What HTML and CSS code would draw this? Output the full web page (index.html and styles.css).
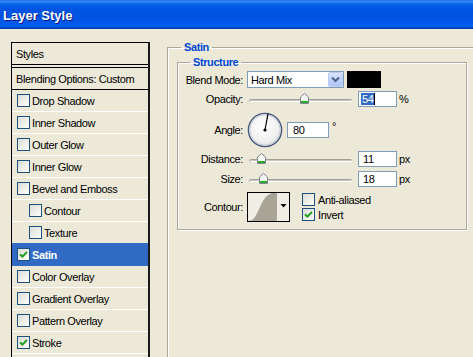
FILE: index.html
```html
<!DOCTYPE html>
<html>
<head>
<meta charset="utf-8">
<title>Layer Style</title>
<link rel="stylesheet" href="styles.css">
</head>
<body>
<div class="titlebar">Layer Style</div>
<div class="client">
  <div class="stylelist">
    <div class="item head">Styles</div>
    <div class="item head blend">Blending Options: Custom</div>
    <div class="item"><span class="cb"></span>Drop Shadow</div>
    <div class="item"><span class="cb"></span>Inner Shadow</div>
    <div class="item"><span class="cb"></span>Outer Glow</div>
    <div class="item"><span class="cb"></span>Inner Glow</div>
    <div class="item"><span class="cb"></span>Bevel and Emboss</div>
    <div class="item sub"><span class="cb"></span>Contour</div>
    <div class="item sub"><span class="cb"></span>Texture</div>
    <div class="item sel"><span class="cb"><svg viewBox="0 0 11 11" width="11" height="11"><path d="M2 5.2 L4.4 7.6 L9 3" fill="none" stroke="#21A121" stroke-width="2"/></svg></span>Satin</div>
    <div class="item"><span class="cb"></span>Color Overlay</div>
    <div class="item"><span class="cb"></span>Gradient Overlay</div>
    <div class="item"><span class="cb"></span>Pattern Overlay</div>
    <div class="item"><span class="cb"><svg viewBox="0 0 11 11" width="11" height="11"><path d="M2 5.2 L4.4 7.6 L9 3" fill="none" stroke="#21A121" stroke-width="2"/></svg></span>Stroke</div>
    <div class="item"></div>
  </div>

  <fieldset class="group satin">
    <legend>Satin</legend>
    <fieldset class="group structure">
      <legend>Structure</legend>

      <div class="row r-blend">
        <span class="lbl">Blend Mode:</span>
        <div class="select">
          <span class="sel-text">Hard Mix</span>
          <span class="sel-btn"><svg width="13" height="13" viewBox="0 0 13 13"><path d="M3 4.5 L6.5 8 L10 4.5" fill="none" stroke="#4D6185" stroke-width="2"/></svg></span>
        </div>
        <span class="swatch"></span>
      </div>

      <div class="row r-opacity">
        <span class="lbl">Opacity:</span>
        <div class="slider">
          <span class="track"></span>
          <svg class="thumb" style="left:53px" width="9" height="11" viewBox="0 0 9 11"><path d="M0.5 4 L4.5 0.5 L8.5 4 V10.5 H0.5 Z" fill="#F6F6F2" stroke="#7C8591"/><rect x="1" y="8" width="7" height="2" fill="#2BA82B"/></svg>
        </div>
        <div class="field"><span class="hl">54</span><span class="caret"></span></div>
        <span class="unit">%</span>
      </div>

      <div class="row r-angle">
        <span class="lbl">Angle:</span>
        <svg class="dial" width="36" height="36" viewBox="0 0 36 36">
          <defs>
            <radialGradient id="dg" cx="45%" cy="40%" r="65%">
              <stop offset="0" stop-color="#FFFFFF"/>
              <stop offset="0.7" stop-color="#F0F0F0"/>
              <stop offset="1" stop-color="#D4D6DE"/>
            </radialGradient>
          </defs>
          <circle cx="18" cy="18" r="16.6" fill="url(#dg)" stroke="#47597C" stroke-width="1.4"/>
          <circle cx="18" cy="18" r="15.3" fill="none" stroke="#C3CAD8" stroke-width="1"/>
          <line x1="18" y1="18" x2="21" y2="1.6" stroke="#000" stroke-width="1.2"/>
          <circle cx="18" cy="18" r="1.6" fill="#000"/>
        </svg>
        <div class="field angle">80</div>
        <span class="unit deg">°</span>
      </div>

      <div class="row r-dist">
        <span class="lbl">Distance:</span>
        <div class="slider">
          <span class="track"></span>
          <svg class="thumb" style="left:10px" width="9" height="11" viewBox="0 0 9 11"><path d="M0.5 4 L4.5 0.5 L8.5 4 V10.5 H0.5 Z" fill="#F6F6F2" stroke="#7C8591"/><rect x="1" y="8" width="7" height="2" fill="#2BA82B"/></svg>
        </div>
        <div class="field">11</div>
        <span class="unit">px</span>
      </div>

      <div class="row r-size">
        <span class="lbl">Size:</span>
        <div class="slider">
          <span class="track"></span>
          <svg class="thumb" style="left:12px" width="9" height="11" viewBox="0 0 9 11"><path d="M0.5 4 L4.5 0.5 L8.5 4 V10.5 H0.5 Z" fill="#F6F6F2" stroke="#7C8591"/><rect x="1" y="8" width="7" height="2" fill="#2BA82B"/></svg>
        </div>
        <div class="field">18</div>
        <span class="unit">px</span>
      </div>

      <div class="row r-contour">
        <span class="lbl">Contour:</span>
        <div class="contour">
          <svg class="curve" width="30" height="28" viewBox="0 0 30 28"><path d="M0 28 L3 27.5 C7 26 9 20 12 14 C15 7 18 2 24 0 L29 0 L29 28 Z" fill="#A8A496"/></svg>
          <span class="drop"><svg width="7" height="4" viewBox="0 0 7 4"><path d="M0.5 0 L6.5 0 L3.5 3.5 Z" fill="#000"/></svg></span>
        </div>
        <div class="cbgroup">
          <div class="cbrow"><span class="cb"></span>Anti-aliased</div>
          <div class="cbrow"><span class="cb"><svg viewBox="0 0 11 11" width="11" height="11"><path d="M2 5.2 L4.4 7.6 L9 3" fill="none" stroke="#21A121" stroke-width="2"/></svg></span>Invert</div>
        </div>
      </div>
    </fieldset>
  </fieldset>
</div>
</body>
</html>
```

FILE: styles.css
```css
* { box-sizing: border-box; }

html, body {
  margin: 0;
  padding: 0;
}

body {
  width: 473px;
  height: 357px;
  overflow: hidden;
  background: #ECE9D8;
  font-family: "Liberation Sans", Arial, sans-serif;
  font-size: 11px;
  letter-spacing: -0.4px;
  color: #000;
}

.titlebar {
  height: 29px;
  padding: 3px 0 0 3px;
  line-height: 26px;
  font-size: 13px;
  font-weight: bold;
  letter-spacing: 0;
  color: #fff;
  text-shadow: 1px 1px 0 #0A1883;
  background: linear-gradient(to bottom,
    #0B5CDB 0px, #3D8DF6 1px, #2C82F3 2px, #1470EC 3px, #0660E4 5px,
    #0056E2 8px, #0053E1 14px, #0055E6 20px, #005AEE 24px, #0060F2 26px,
    #0053D8 27px, #003CA8 28px, #003CA8 29px);
}

.client {
  display: flex;
  align-items: flex-start;
}

/* ---------- left style list ---------- */
.stylelist {
  flex: none;
  margin: 13px 0 0 11px;
  width: 139px;
  height: 330px;
  border-top: 1px solid #000;
  border-left: 1px solid #000;
  border-right: 2px solid #1A1A1A;
}

.item {
  height: 22px;
  display: flex;
  align-items: center;
  padding-left: 5px;
  border-bottom: 1px solid #FFFFFF;
  white-space: nowrap;
}

.item.head {
  padding-left: 4px;
  border-bottom-color: #000;
}

.item.blend {
  height: 23px;
  margin-top: 2px;
  border-top: 1px solid #000;
}

.item.sub {
  padding-left: 17px;
}

.item.sel {
  background: #316AC5;
  color: #fff;
  font-weight: bold;
  border-bottom-color: #316AC5;
  box-shadow: 0 -1px 0 #316AC5;
}

.cb {
  flex: none;
  width: 13px;
  height: 13px;
  margin-right: 2px;
  border: 1px solid #1C5180;
  background: linear-gradient(135deg, #DCDCD7 0%, #F4F4F1 70%, #FFFFFF 100%);
  display: flex;
}

.cb svg {
  display: block;
}

/* ---------- group boxes ---------- */
fieldset {
  margin: 0;
  padding: 0;
  min-width: 0;
}

.group {
  border: 1px solid #ACA899;
  box-shadow: inset 1px 1px 0 #FFFFFF, 1px 1px 0 #FFFFFF;
}

.group > legend {
  padding: 0 3px;
  line-height: 13px;
  font-weight: bold;
  color: #0046D5;
}

.satin {
  flex: none;
  margin: 12px 0 0 17px;
  width: 320px;
  height: 400px;
}

.satin > legend {
  margin-left: 13px;
}

.structure {
  margin: 2px 0 0 9px;
  width: 290px;
  padding: 2px 0 7px 0;
}

.structure > legend {
  margin-left: 12px;
}

/* ---------- rows ---------- */
.row {
  display: flex;
  align-items: center;
}

.lbl {
  flex: none;
  width: 65px;
  margin-right: 4px;
  text-align: right;
  white-space: nowrap;
}

.r-blend { height: 17px; }
.r-opacity { height: 16px; margin-top: 3px; }
.r-angle { height: 36px; margin-top: 5px; }
.r-dist { height: 16px; margin-top: 3px; }
.r-size { height: 16px; margin-top: 4px; }
.r-contour { height: 30px; margin-top: 5px; align-items: flex-start; }
.r-contour .lbl { align-self: center; }

/* select */
.select {
  flex: none;
  width: 97px;
  height: 17px;
  display: flex;
  align-items: center;
  padding-left: 3px;
  border: 1px solid #7F9DB9;
  background: #fff;
}

.sel-text {
  flex: 1;
}

.sel-btn {
  flex: none;
  width: 15px;
  height: 15px;
  display: flex;
  align-items: center;
  justify-content: center;
  border: 1px solid #BACBF4;
  border-radius: 2px;
  background: linear-gradient(to bottom, #DCE6FD, #BCCDF7 60%, #B2C5F5);
}

.sel-btn svg { display: block; }

.swatch {
  flex: none;
  width: 34px;
  height: 17px;
  margin-left: 3px;
  background: #000;
}

/* slider */
.slider {
  flex: none;
  position: relative;
  width: 106px;
  height: 16px;
  padding-top: 8px;
  margin-right: 5px;
}

.track {
  display: block;
  height: 3px;
  margin: 0 1px 0 3px;
  border-radius: 2px;
  background: linear-gradient(to bottom, #A09F98 0, #A09F98 1px, #C8C6BB 1px, #C8C6BB 2px, #FFFFFF 2px);
  box-shadow: -1px 0 0 #B5B3A8;
}

.thumb {
  position: absolute;
  top: 2px;
  display: block;
}

/* text field */
.field {
  flex: none;
  width: 39px;
  height: 16px;
  display: flex;
  align-items: center;
  padding-left: 4px;
  border: 1px solid #7F9DB9;
  background: #fff;
}

.field.angle {
  width: 42px;
  margin-left: 4px;
  padding-left: 5px;
}

.hl {
  background: #316AC5;
  color: #fff;
  line-height: 12px;
  padding: 0 1px 0 1px;
  margin-left: -2px;
}

.caret {
  display: block;
  width: 1px;
  height: 12px;
  background: #000;
}

.unit {
  margin-left: 2px;
}

.unit.deg {
  margin-left: 3px;
  align-self: flex-start;
  margin-top: 8px;
}

.dial {
  flex: none;
  display: block;
}

/* contour picker */
.contour {
  flex: none;
  width: 43px;
  height: 30px;
  display: flex;
  border: 1px solid #000;
  background: #F0EEE4;
}

.curve {
  display: block;
  flex: none;
  margin-left: 0;
}

.drop {
  flex: 1;
  display: flex;
  align-items: center;
  justify-content: center;
  padding-bottom: 2px;
}

.drop svg { display: block; }

.cbgroup {
  margin: 1px 0 0 12px;
  display: flex;
  flex-direction: column;
  gap: 2px;
}

.cbrow {
  height: 13px;
  display: flex;
  align-items: center;
  white-space: nowrap;
}

.cbrow .cb {
  margin-right: 3px;
}
```
